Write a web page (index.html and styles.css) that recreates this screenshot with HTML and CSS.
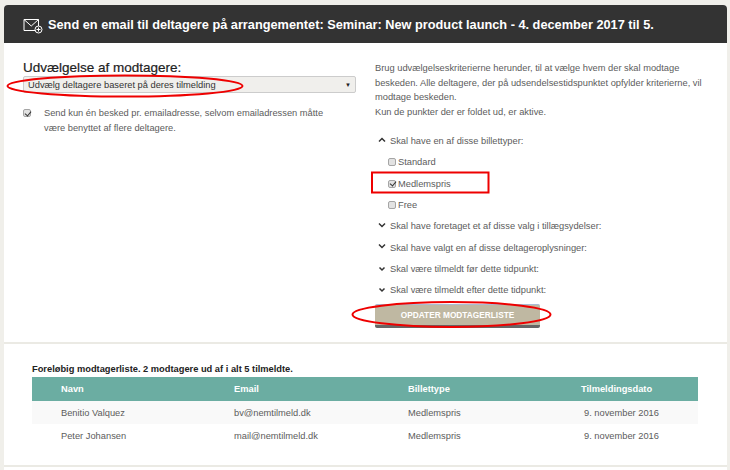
FILE: index.html
```html
<!DOCTYPE html>
<html lang="da">
<head>
<meta charset="utf-8">
<title>Send en email</title>
<link rel="stylesheet" href="styles.css">
</head>
<body>
<main class="card">
  <header class="head">
    <svg class="head-icon" width="20" height="16" viewBox="0 0 20 16" fill="none" stroke="#fff" stroke-width="1">
      <path d="M1 1.500h14.500v11H1z"/>
      <path d="M1 1.500 8.250 8l7.250-6.500"/>
      <circle cx="15.500" cy="11.500" r="3.500" fill="#333"/>
      <path d="M13.500 11.500h4M15.500 9.500v4"/>
    </svg>
    <h1 class="title">Send en email til deltagere på arrangementet: Seminar: New product launch - 4. december 2017 til 5.</h1>
  </header>
  <section class="form">
    <div class="col-left">
      <h2 class="sel-title">Udvælgelse af modtagere:</h2>
      <div class="select"><span>Udvælg deltagere baseret på deres tilmelding</span><i class="caret">▼</i></div>
      <div class="once">
        <span class="cb checked"></span>
        <p>Send kun én besked pr. emailadresse, selvom emailadressen måtte være benyttet af flere deltagere.</p>
      </div>
    </div>
    <div class="col-right">
      <p class="intro">Brug udvælgelseskriterierne herunder, til at vælge hvem der skal modtage beskeden. Alle deltagere, der på udsendelsestidspunktet opfylder kriterierne, vil modtage beskeden.<br>Kun de punkter der er foldet ud, er aktive.</p>
      <div class="rule"><svg class="chev up" width="8" height="6" viewBox="0 0 8 6"><path d="M1 4.500 4 1.500l3 3" fill="none" stroke="#333" stroke-width="1.500"/></svg>Skal have en af disse billettyper:</div>
      <div class="opt"><span class="cb"></span>Standard</div>
      <div class="opt"><span class="cb checked"></span>Medlemspris</div>
      <div class="opt"><span class="cb"></span>Free</div>
      <div class="rule"><svg class="chev up" width="8" height="6" viewBox="0 0 8 6"><path d="M1 1.500 4 4.500l3-3" fill="none" stroke="#333" stroke-width="1.500"/></svg>Skal have foretaget et af disse valg i tillægsydelser:</div>
      <div class="rule"><svg class="chev up" width="8" height="6" viewBox="0 0 8 6"><path d="M1 1.500 4 4.500l3-3" fill="none" stroke="#333" stroke-width="1.500"/></svg>Skal have valgt en af disse deltageroplysninger:</div>
      <div class="rule"><svg class="chev" width="8" height="6" viewBox="0 0 8 6"><path d="M1.500 1.500 4 4l2.500-2.500" fill="none" stroke="#333" stroke-width="1.500"/></svg>Skal være tilmeldt før dette tidpunkt:</div>
      <div class="rule"><svg class="chev" width="8" height="6" viewBox="0 0 8 6"><path d="M1.500 1.500 4 4l2.500-2.500" fill="none" stroke="#333" stroke-width="1.500"/></svg>Skal være tilmeldt efter dette tidpunkt:</div>
      <button class="update">OPDATER MODTAGERLISTE</button>
    </div>
  </section>
  <section class="list">
    <p class="list-title">Foreløbig modtagerliste. 2 modtagere ud af i alt 5 tilmeldte.</p>
    <table class="tbl">
      <thead><tr><th>Navn</th><th>Email</th><th>Billettype</th><th>Tilmeldingsdato</th></tr></thead>
      <tbody>
        <tr><td>Benitio Valquez</td><td>bv@nemtilmeld.dk</td><td>Medlemspris</td><td>9. november 2016</td></tr>
        <tr><td>Peter Johansen</td><td>mail@nemtilmeld.dk</td><td>Medlemspris</td><td>9. november 2016</td></tr>
      </tbody>
    </table>
  </section>
</main>
<svg class="marks" width="730" height="470" viewBox="0 0 730 470" fill="none" stroke="#ee0000" stroke-width="2">
  <ellipse cx="125" cy="86" rx="117.500" ry="10.500"/>
  <rect x="372" y="172.500" width="116.500" height="20"/>
  <ellipse cx="451.500" cy="314.500" rx="99" ry="12.500"/>
</svg>
</body>
</html>
```
FILE: styles.css
```css
* { box-sizing: border-box; }
html, body { margin: 0; padding: 0; }
body {
  width: 730px;
  height: 470px;
  overflow: hidden;
  position: relative;
  background: #f0efea;
  font-family: "Liberation Sans", Arial, sans-serif;
  font-size: 9.300px;
  color: #5c5c5c;
  padding: 5px 3px 0 4px;
}
.card { background: #fff; height: 465px; border-radius: 4px 4px 0 0; }
.head {
  height: 38px;
  background: #333;
  border-radius: 4px 4px 0 0;
  display: flex;
  align-items: center;
  padding-left: 19px;
  gap: 5px;
}
.head-icon { flex: none; margin-top: 3px; }
.title { margin: 0; color: #fff; font-size: 12.750px; font-weight: bold; white-space: nowrap; }
.form { display: flex; height: 301px; border-bottom: 2px solid #ebeae4; }
.col-left { width: 367px; padding: 17px 15px 0 19px; }
.sel-title { margin: 0; font-size: 13.500px; font-weight: normal; color: #222; line-height: 16px; -webkit-text-stroke: .2px #222; }
.select {
  height: 17px;
  background: #f0efec;
  border: 1px solid #ccc;
  border-radius: 2px;
  display: flex;
  justify-content: space-between;
  align-items: center;
  padding: 0 4px;
  color: #333;
}
.caret { font-style: normal; font-size: 6px; color: #222; }
.once { display: flex; gap: 13px; margin-top: 13px; }
.once p { margin: 0; line-height: 14.500px; width: 285px; }
.cb {
  flex: none;
  display: inline-block;
  width: 8px;
  height: 8px;
  margin-top: 3px;
  background: #e2e2e2;
  border: 1px solid #a5a5a5;
  border-radius: 2px;
  position: relative;
}
.cb.checked::after {
  content: "";
  position: absolute;
  left: 1.500px;
  top: -.5px;
  width: 3px;
  height: 5px;
  border: solid #333;
  border-width: 0 1.500px 1.500px 0;
  transform: rotate(40deg);
}
.col-right { flex: 1; padding: 18px 0 0 4px; }
.intro { margin: 0 0 11.500px; line-height: 14.500px; width: 340px; }
.rule { display: flex; align-items: center; height: 21.300px; gap: 4px; padding-left: 3px; }
.chev { flex: none; }
.chev.up { margin-top: -3px; }
.opt { display: flex; align-items: center; height: 21.300px; gap: 2px; padding-left: 13px; }
.opt .cb { margin-top: 0; }
.update {
  display: block;
  margin: 3px 0 0;
  width: 165px;
  height: 24px;
  background: #bfb8a2;
  border: 0;
  border-top: 1px solid #a9bcd6;
  border-bottom: 3px solid #666;
  border-radius: 2px;
  color: #fff;
  font: bold 8.300px "Liberation Sans", Arial, sans-serif;
}
.list { height: 123px; padding: 19px 28px 0; border-bottom: 2px solid #ebeae4; }
.list-title { margin: 0; font-size: 9.300px; font-weight: bold; color: #222; line-height: 13px; }
.tbl { width: 666px; border-collapse: collapse; table-layout: fixed; margin-top: 1px; }
.tbl th { background: #6bada2; color: #fff; font-size: 9.300px; text-align: left; height: 24px; padding: 0 0 0 29px; }
.tbl td { height: 23px; padding: 1px 0 0 29px; }
.tbl tbody tr:first-child td { background: #f9f9f9; }
.tbl th:nth-child(1) { width: 173px; }
.tbl th:nth-child(2) { width: 174px; }
.tbl th:nth-child(3) { width: 174px; }
.tbl th:nth-child(4) { padding-left: 28px; }
.tbl td:nth-child(4) { padding-left: 31px; }
.marks { position: absolute; left: 0; top: 0; pointer-events: none; }
```
